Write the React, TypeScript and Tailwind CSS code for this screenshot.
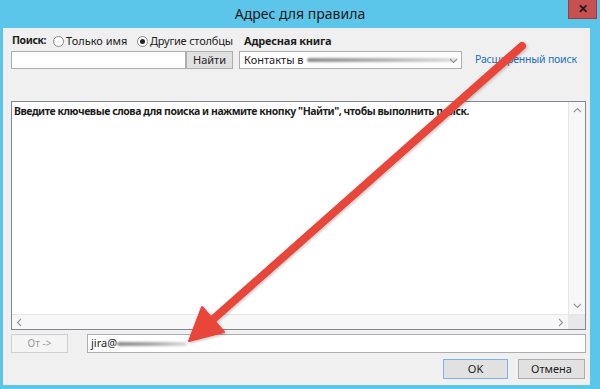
import React from 'react';

const font = { fontFamily: '"Noto Sans", "Open Sans", sans-serif' };

function Radio({ checked }: { checked?: boolean }) {
  return (
    <span className="w-[11px] h-[11px] rounded-full border border-[#8a8a8a] bg-white flex items-center justify-center">
      {checked && <span className="w-[5px] h-[5px] rounded-full bg-[#222]" />}
    </span>
  );
}

function Chevron({ dir }: { dir: 'up' | 'down' | 'left' | 'right' }) {
  const d = {
    up: 'M1 6 L4.5 2.5 L8 6',
    down: 'M1 3 L4.5 6.5 L8 3',
    left: 'M6 1 L2.5 4.5 L6 8',
    right: 'M3 1 L6.5 4.5 L3 8',
  }[dir];
  return (
    <svg width="9" height="9" viewBox="0 0 9 9">
      <path d={d} fill="none" stroke="#9a9a9a" strokeWidth="1.2" />
    </svg>
  );
}

export default function App() {
  return (
    <div className="relative w-[600px] h-[389px] overflow-hidden bg-[#5cc6ea] flex flex-col text-[11px] text-[#1e1e1e]" style={font}>
      {/* title bar */}
      <div className="h-[28px] flex-shrink-0 relative flex items-center justify-center">
        <span className="text-[14px] text-[#1b1b1b] -mt-[2px]">Адрес для правила</span>
        <div className="absolute right-[3px] top-0 w-[29px] h-[19px] bg-[#c75050] border border-[#9c3c3c] border-t-0 flex items-center justify-center">
          <span className="text-[12px] font-bold leading-none text-[#1a1a1a] -mt-[1px]">✕</span>
        </div>
      </div>

      {/* body */}
      <div className="flex-1 ml-[3px] mr-[10px] mb-[4px] bg-[#f0f0f0] flex flex-col pl-[8px] pr-[4px] pt-[5px]">
        {/* row 1 */}
        <div className="h-[16px] flex items-center">
          <span className="font-bold w-[41px] ml-[1px] text-[10.5px] tracking-[-0.4px]">Поиск:</span>
          <Radio />
          <span className="ml-[2px] w-[71px]">Только имя</span>
          <Radio checked />
          <span className="ml-[2px] w-[92px] tracking-[-0.2px]">Другие столбцы</span>
          <span className="ml-[2px] font-bold tracking-[-0.2px]">Адресная книга</span>
        </div>

        {/* row 2 */}
        <div className="h-[18px] mt-[2px] flex items-stretch">
          <div className="w-[175px] bg-white border border-[#abadb3]" />
          <div className="w-[47px] bg-[#e1e1e1] border border-[#adadad] flex items-center justify-center">Найти</div>
          <div className="ml-[6px] w-[223px] bg-white border border-[#abadb3] flex items-center pl-[4px] relative">
            <span>Контакты в</span>
            <span className="ml-[3px] w-[150px] h-[4px] rounded-full bg-gradient-to-r from-[#8a8a8a] via-[#b0b0b0] to-[#e0e0e0] blur-[1px]" />
            <span className="absolute right-[3px] top-[4px]"><Chevron dir="down" /></span>
          </div>
          <div className="ml-[13px] flex items-center text-[#1c6fbf] text-[10.5px] tracking-[-0.2px]">Расширенный поиск</div>
        </div>

        {/* results list */}
        <div className="mt-[32px] h-[229px] bg-white border border-[#828790] flex flex-col">
          <div className="flex flex-1">
            <div className="flex-1 pl-[2px] pt-[2px] font-bold text-[10.5px] tracking-[-0.45px]">
              Введите ключевые слова для поиска и нажмите кнопку "Найти", чтобы выполнить поиск.
            </div>
            <div className="w-[17px] border-l border-[#e6e6e6] bg-[#f7f7f7] flex flex-col items-center justify-between py-[4px]">
              <Chevron dir="up" />
              <Chevron dir="down" />
            </div>
          </div>
          <div className="h-[15px] flex border-t border-[#e6e6e6]">
            <div className="flex-1 bg-[#f7f7f7] flex items-center justify-between px-[3px]">
              <Chevron dir="left" />
              <Chevron dir="right" />
            </div>
            <div className="w-[17px] bg-[#e8e8e8]" />
          </div>
        </div>

        {/* from row */}
        <div className="h-[19px] mt-[4px] flex items-stretch">
          <div className="w-[57px] border border-[#cfcfcf] bg-[#f4f4f4] flex items-center justify-center text-[#9a9a9a] text-[10px]">От -&gt;</div>
          <div className="ml-[19px] flex-1 bg-white border border-[#abadb3] flex items-center pl-[3px]">
            <span>jira@</span>
            <span className="w-[70px] h-[4px] rounded-full bg-gradient-to-r from-[#8a8a8a] via-[#a8a8a8] to-[#dcdcdc] blur-[1px]" />
          </div>
        </div>

        {/* buttons */}
        <div className="h-[20px] mt-[6px] flex justify-end gap-[10px] pr-[1px]">
          <div className="w-[65px] bg-[#e1e1e1] border border-[#7eb4ea] flex items-center justify-center">OK</div>
          <div className="w-[67px] bg-[#e1e1e1] border border-[#adadad] flex items-center justify-center">Отмена</div>
        </div>
      </div>

      {/* annotation arrow */}
      <svg className="absolute inset-0 pointer-events-none" width="600" height="389" viewBox="0 0 600 389">
        <defs>
          <filter id="sh" x="-10%" y="-10%" width="120%" height="120%">
            <feDropShadow dx="1" dy="1" stdDeviation="1.5" floodColor="#000" floodOpacity="0.25" />
          </filter>
        </defs>
        <g filter="url(#sh)" fill="#e8453b" stroke="#e8453b">
          <line x1="522" y1="46" x2="210" y2="322" strokeWidth="8" strokeLinecap="round" />
          <polygon points="189,341 224,332 202,307" strokeWidth="2" strokeLinejoin="round" />
        </g>
      </svg>
    </div>
  );
}
